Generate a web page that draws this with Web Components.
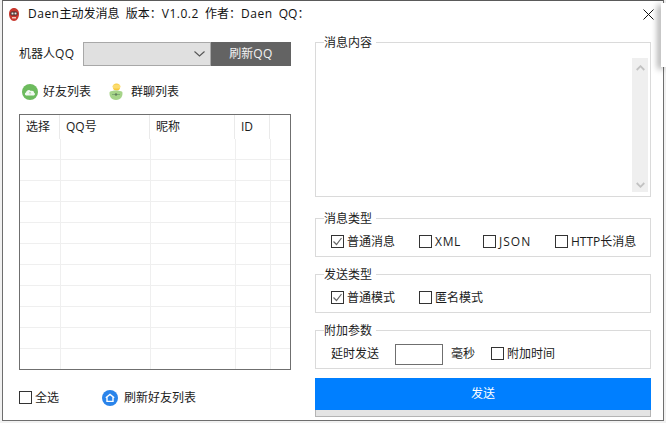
<!DOCTYPE html>
<html>
<head>
<meta charset="utf-8">
<style>
html, body { margin:0; padding:0; }
body {
    width:666px;
    height:423px;
    overflow:hidden;
    background:#f1f1f1;
    font:12px/16px "Open Sans", "Noto Sans CJK SC", "Liberation Sans", sans-serif;
    color:#1c1c1c;
}
</style>
</head>
<body>
<app-window>
    <title-bar slot="title"></title-bar>
    <left-pane slot="left"></left-pane>
    <right-pane slot="right"></right-pane>
</app-window>

<script>
class AppWindow extends HTMLElement {
    constructor() {
        super()
        const shadow = this.attachShadow({ mode: 'open' })
        shadow.innerHTML = `
        <style>
        :host {
            display:block;
            box-sizing:border-box;
            position:relative;
            width:662px;
            height:421px;
            margin-left:2px;
            background:#fff;
            border:1px solid #6e6e6e;
            border-top-color:#5a5a5a;
        }
        main {
            display:grid;
            grid-template-columns:272px 336px;
            column-gap:24px;
            padding:7px 12px 0 16px;
        }
        .behind {
            position:absolute;
            right:-3px;
            top:2px;
            height:64px;
            width:5px;
            background:#fff;
            box-shadow:-3px 2px 6px rgba(0,0,0,.4);
        }
        </style>
        <slot name="title"></slot>
        <main>
            <slot name="left"></slot>
            <slot name="right"></slot>
        </main>
        <div class="behind"></div>
        `
    }
}

class TitleBar extends HTMLElement {
    constructor() {
        super()
        const shadow = this.attachShadow({ mode: 'open' })
        shadow.innerHTML = `
        <style>
        :host {
            display:flex;
            align-items:center;
            height:26px;
            padding-left:6px;
            color:#111;
        }
        svg { flex:none; margin-right:9px; }
        .text { white-space:pre; }
        b { font-weight:400; letter-spacing:.5px; }
        .close { margin-left:auto; margin-right:9px; }
        </style>
        <svg width="10" height="13" viewBox="0 0 10 13">
            <path d="M5 0 C8 0 10 2.5 10 6 C10 9.5 8 13 5 13 C2 13 0 9.5 0 6 C0 2.5 2 0 5 0Z" fill="#c8382e"/>
            <rect x="1.5" y="3.5" width="7" height="4" rx="1.5" fill="#3a2a2a"/>
            <rect x="2.5" y="4.5" width="2" height="2" fill="#f2e6e0"/>
            <rect x="5.5" y="4.5" width="2" height="2" fill="#f2e6e0"/>
            <rect x="3" y="9" width="4" height="1.5" fill="#f0c8b8"/>
        </svg>
        <span class="text"><b>Daen</b>主动发消息  版本：<b>V1.0.2</b>  作者：<b>Daen</b>  QQ：</span>
        <svg class="close" width="11" height="11" viewBox="0 0 11 11">
            <path d="M.5 .5 L10.5 10.5 M10.5 .5 L.5 10.5" stroke="#111" stroke-width="1" fill="none"/>
        </svg>
        `
    }
}

class CheckBox extends HTMLElement {
    constructor() {
        super()
        const shadow = this.attachShadow({ mode: 'open' })
        const tick = this.hasAttribute('checked')
            ? '<svg width="11" height="11" viewBox="0 0 11 11"><path d="M1.5 5.5 L4.5 8.5 L9.5 2" stroke="#666" stroke-width="1.2" fill="none"/></svg>'
            : ''
        shadow.innerHTML = `
        <style>
        :host {
            display:inline-flex;
            align-items:center;
            height:16px;
            white-space:nowrap;
        }
        .box {
            box-sizing:border-box;
            flex:none;
            width:13px;
            height:13px;
            margin-right:3px;
            border:1px solid #333;
            display:flex;
        }
        </style>
        <span class="box">${tick}</span><slot></slot>
        `
    }
}

class GroupBox extends HTMLElement {
    constructor() {
        super()
        const shadow = this.attachShadow({ mode: 'open' })
        shadow.innerHTML = `
        <style>
        :host { display:block; }
        fieldset {
            box-sizing:border-box;
            margin:0;
            padding:0;
            height:47px;
            border:1px solid #dadada;
        }
        legend {
            margin-left:8px;
            padding:0;
            width:52px;
            height:16px;
            line-height:18px;
            white-space:nowrap;
        }
        .body {
            display:flex;
            align-items:center;
            height:23px;
            margin-top:4px;
            padding-left:15px;
        }
        </style>
        <fieldset>
            <legend>${this.getAttribute('label')}</legend>
            <div class="body"><slot></slot></div>
        </fieldset>
        `
    }
}

class ComboRow extends HTMLElement {
    constructor() {
        super()
        const shadow = this.attachShadow({ mode: 'open' })
        shadow.innerHTML = `
        <style>
        :host {
            display:grid;
            grid-template-columns:64px 128px 80px;
            align-items:stretch;
            height:24px;
        }
        label { align-self:center; }
        b { font-weight:400; letter-spacing:.5px; }
        .select {
            box-sizing:border-box;
            display:flex;
            align-items:center;
            justify-content:flex-end;
            padding-right:5px;
            background:#e0e0e0;
            border:1px solid #a8a8a8;
        }
        button {
            border:none;
            padding:0;
            background:#636363;
            color:#f2f2f2;
            font:inherit;
        }
        </style>
        <label>机器人<b>QQ</b></label>
        <div class="select">
            <svg width="11" height="6" viewBox="0 0 11 6"><path d="M.5 .5 L5.5 5 L10.5 .5" stroke="#555" stroke-width="1.1" fill="none"/></svg>
        </div>
        <button>刷新<b>QQ</b></button>
        `
    }
}

class IconLabel extends HTMLElement {
    constructor() {
        super()
        const shadow = this.attachShadow({ mode: 'open' })
        const icons = {
            cloud: `<svg width="16" height="16" viewBox="0 0 16 16">
                <circle cx="8" cy="8" r="8" fill="#6dbb5e"/>
                <path d="M4.2 11.4 C2.6 11.4 2.4 9 4 8.6 C4.4 6.2 7.4 5.2 8.8 7 C10.6 6.2 12.2 7.4 12 8.8 C13.4 9.2 13.2 11.4 11.8 11.4 Z" fill="#f2faf2"/>
                <path d="M8 8.2 V10.4 M7 9.2 L8 8.2 L9 9.2" stroke="#a8dba0" stroke-width=".8" fill="none"/>
            </svg>`,
            group: `<svg width="14" height="17" viewBox="0 0 14 17">
                <circle cx="7.5" cy="4" r="3.6" fill="#f8c93a"/>
                <rect x="3.5" y="1.5" width="8" height="4" rx="2" fill="#fbdc70"/>
                <path d="M.6 9 C3 7 11 7 13.4 9 C14 13 12 17 7 17 C2 17 0 13 .6 9Z" fill="#a6d489"/>
                <path d="M3 11.5 H11" stroke="#7fae74" stroke-width="1"/>
                <circle cx="7" cy="11.5" r="1.2" fill="#66805c"/>
            </svg>`,
            home: `<svg width="16" height="16" viewBox="0 0 16 16">
                <circle cx="8" cy="8" r="8" fill="#2a84ea"/>
                <path d="M3.8 7.8 L8 4.4 L12.2 7.8 M5 7.2 V11.4 H11 V7.2" stroke="#fff" stroke-width="1.4" fill="none"/>
            </svg>`
        }
        shadow.innerHTML = `
        <style>
        :host {
            display:inline-flex;
            align-items:center;
            gap:var(--gap, 5px);
            height:17px;
            white-space:nowrap;
        }
        svg { flex:none; }
        </style>
        ${icons[this.getAttribute('icon')]}<slot></slot>
        `
    }
}

class FriendTable extends HTMLElement {
    constructor() {
        super()
        const shadow = this.attachShadow({ mode: 'open' })
        const heads = ['选择', 'QQ号', '昵称', 'ID', '']
        const head = heads.map(t => `<div class="th">${t}</div>`).join('')
        let rows = ''
        for (let i = 0; i < 11; i++) {
            rows += '<div class="tr"><i></i><i></i><i></i><i></i><i></i></div>'
        }
        shadow.innerHTML = `
        <style>
        :host {
            display:block;
            box-sizing:border-box;
            height:256px;
            border:1px solid #6f6f6f;
            overflow:hidden;
        }
        .head {
            display:grid;
            grid-template-columns:40px 90px 85px 35px 20px;
            height:24px;
        }
        .th {
            padding-left:6px;
            line-height:24px;
            border-right:1px solid #eaeaea;
        }
        .th:last-child { border-right:none; }
        .tr {
            display:grid;
            grid-template-columns:41px 90px 85px 35px 19px;
            height:21px;
            box-sizing:border-box;
            border-bottom:1px solid #efefef;
        }
        i { border-right:1px solid #efefef; }
        i:last-child { border-right:none; }
        </style>
        <div class="head">${head}</div>
        ${rows}
        `
    }
}

class LeftPane extends HTMLElement {
    constructor() {
        super()
        const shadow = this.attachShadow({ mode: 'open' })
        shadow.innerHTML = `
        <style>
        :host { display:block; padding-top:8px; }
        .tabs {
            display:flex;
            margin:17px 0 14px 3px;
            gap:18px;
        }
        .tabs icon-label:last-child { --gap:8px; }
        .foot {
            display:flex;
            align-items:center;
            margin-top:19px;
        }
        .foot icon-label { margin-left:43px; --gap:6px; }
        </style>
        <combo-row></combo-row>
        <div class="tabs">
            <icon-label icon="cloud">好友列表</icon-label>
            <icon-label icon="group">群聊列表</icon-label>
        </div>
        <friend-table></friend-table>
        <div class="foot">
            <check-box>全选</check-box>
            <icon-label icon="home">刷新好友列表</icon-label>
        </div>
        `
    }
}

class MessageBox extends HTMLElement {
    constructor() {
        super()
        const shadow = this.attachShadow({ mode: 'open' })
        shadow.innerHTML = `
        <style>
        :host { display:block; }
        fieldset {
            box-sizing:border-box;
            margin:0;
            padding:0;
            height:163px;
            border:1px solid #dadada;
            display:flex;
            justify-content:flex-end;
        }
        legend {
            margin-left:8px;
            padding:0;
            width:52px;
            height:16px;
            line-height:18px;
            white-space:nowrap;
        }
        .bar {
            box-sizing:border-box;
            width:16px;
            height:134px;
            margin:8px 2px 0 0;
            background:#efefef;
            display:flex;
            flex-direction:column;
            justify-content:space-between;
            align-items:center;
            padding:7px 0 4px;
        }
        </style>
        <fieldset>
            <legend>消息内容</legend>
            <div class="bar">
                <svg width="9" height="6" viewBox="0 0 9 6"><path d="M.7 5 L4.5 1.2 L8.3 5" stroke="#c2c2c2" stroke-width="1.8" fill="none"/></svg>
                <svg width="9" height="6" viewBox="0 0 9 6"><path d="M.7 1 L4.5 4.8 L8.3 1" stroke="#c2c2c2" stroke-width="1.8" fill="none"/></svg>
            </div>
        </fieldset>
        `
    }
}

class RightPane extends HTMLElement {
    constructor() {
        super()
        const shadow = this.attachShadow({ mode: 'open' })
        shadow.innerHTML = `
        <style>
        :host { display:flex; flex-direction:column; gap:9px; }
        message-box { margin-bottom:4px; }
        .w88 { width:88px; }
        .w64 { width:64px; letter-spacing:.7px; }
        .w72 { width:72px; letter-spacing:1px; }
        .delay { width:64px; }
        .num {
            box-sizing:border-box;
            width:48px;
            height:21px;
            margin:2px 8px 0 0;
            border:1px solid #6f6f6f;
        }
        .ms { width:40px; }
        .send {
            display:block;
            width:100%;
            height:32px;
            border:none;
            padding:0;
            background:#007fff;
            color:#fff;
            font:inherit;
        }
        .strip {
            box-sizing:border-box;
            height:7px;
            background:#e4e4e4;
            border:1px solid #b4b4b4;
            border-top:none;
        }
        </style>
        <message-box></message-box>
        <group-box label="消息类型">
            <check-box class="w88" checked>普通消息</check-box>
            <check-box class="w64">XML</check-box>
            <check-box class="w72">JSON</check-box>
            <check-box>HTTP长消息</check-box>
        </group-box>
        <group-box label="发送类型">
            <check-box class="w88" checked>普通模式</check-box>
            <check-box>匿名模式</check-box>
        </group-box>
        <group-box label="附加参数">
            <span class="delay">延时发送</span>
            <div class="num"></div>
            <span class="ms">毫秒</span>
            <check-box>附加时间</check-box>
        </group-box>
        <div>
            <button class="send">发送</button>
            <div class="strip"></div>
        </div>
        `
    }
}

customElements.define('app-window', AppWindow)
customElements.define('title-bar', TitleBar)
customElements.define('check-box', CheckBox)
customElements.define('group-box', GroupBox)
customElements.define('combo-row', ComboRow)
customElements.define('icon-label', IconLabel)
customElements.define('friend-table', FriendTable)
customElements.define('left-pane', LeftPane)
customElements.define('message-box', MessageBox)
customElements.define('right-pane', RightPane)
</script>
</body>
</html>
